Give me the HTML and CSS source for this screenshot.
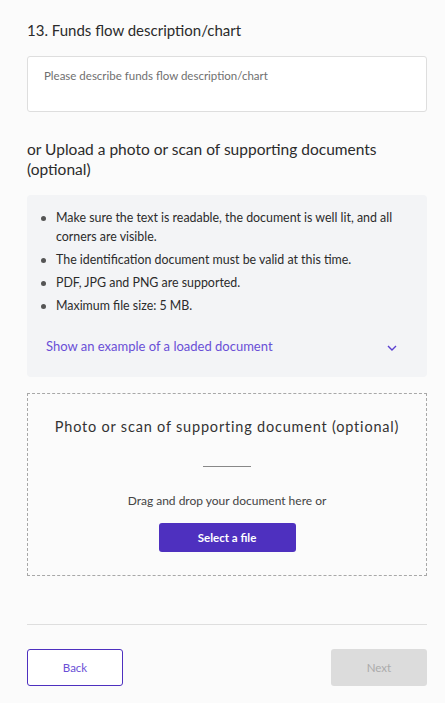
FILE: index.html
```html
<!DOCTYPE html>
<html lang="en">
<head>
<meta charset="utf-8">
<link rel="stylesheet" href="styles.css">
</head>
<body>
<main class="page">
  <h2 class="q-title">13. Funds flow description/chart</h2>
  <div class="textarea"><span class="placeholder">Please describe funds flow description/chart</span></div>

  <h2 class="upload-title">or Upload a photo or scan of supporting documents (optional)</h2>

  <section class="info">
    <ul class="rules">
      <li>Make sure the text is readable, the document is well lit, and all corners are visible.</li>
      <li>The identification document must be valid at this time.</li>
      <li>PDF, JPG and PNG are supported.</li>
      <li>Maximum file size: 5 MB.</li>
    </ul>
    <div class="example">
      <span class="example-link">Show an example of a loaded document</span>
      <svg class="chev" width="10" height="6" viewBox="0 0 10 6"><path d="M1 1l4 4 4-4" fill="none" stroke="#5a3fd0" stroke-width="1.4"/></svg>
    </div>
  </section>

  <section class="drop">
    <h3 class="drop-title">Photo or scan of supporting document (optional)</h3>
    <div class="drop-rule"></div>
    <p class="drop-text">Drag and drop your document here or</p>
    <button class="btn-select">Select a file</button>
  </section>

  <div class="spacer"></div>
  <hr class="divider">
  <div class="nav">
    <button class="btn-back">Back</button>
    <button class="btn-next">Next</button>
  </div>
</main>
</body>
</html>
```

FILE: styles.css
```css
* { box-sizing: border-box; }
html, body { margin: 0; padding: 0; }
body {
  background: #fbfbfb;
  font-family: Lato, "Liberation Sans", sans-serif;
  color: #2b2b2b;
}
.page {
  width: 400px;
  margin: 0 27px;
  padding-top: 20px;
  display: flex;
  flex-direction: column;
}
.q-title {
  margin: 0;
  font-size: 15px;
  font-weight: 400;
  line-height: 20px;
  color: #2b2b2b;
}
.textarea {
  margin-top: 16px;
  height: 56px;
  background: #fff;
  border: 1px solid #dedede;
  border-radius: 3px;
  padding: 9px 16px;
  line-height: 16px;
}
.placeholder {
  font-size: 11.5px;
  color: #6f6f6f;
}
.upload-title {
  margin: 27px 0 0;
  font-size: 15.5px;
  font-weight: 400;
  line-height: 20px;
  color: #2b2b2b;
}
.info {
  margin-top: 16px;
  background: #f3f4f6;
  border-radius: 4px;
  padding: 13px 15px 22px 14px;
}
.rules {
  margin: 0;
  padding: 0;
  list-style: none;
}
.rules li {
  position: relative;
  padding-left: 15px;
  font-size: 12.4px;
  line-height: 19px;
  color: #2b2b2b;
  margin-bottom: 4px;
}
.rules li::before {
  content: "";
  position: absolute;
  left: 0;
  top: 8px;
  width: 5px;
  height: 5px;
  border-radius: 50%;
  background: #555;
}
.example {
  margin-top: 22px;
  display: flex;
  align-items: center;
  justify-content: space-between;
  padding: 0 15px 0 5px;
}
.example-link {
  font-size: 13px;
  line-height: 18px;
  color: #6a4fd6;
}
.chev { margin-top: 4px; }
.drop {
  margin-top: 16px;
  height: 183px;
  border: 1px dashed #a8a8a8;
  display: flex;
  flex-direction: column;
  align-items: center;
}
.drop-title {
  margin: 24px 0 0;
  font-size: 14.5px;
  font-weight: 400;
  letter-spacing: 0.8px;
  line-height: 18px;
  color: #333;
}
.drop-rule {
  margin-top: 30px;
  width: 48px;
  height: 1px;
  background: #888;
}
.drop-text {
  margin: 26px 0 0;
  font-size: 12px;
  line-height: 15px;
  color: #444;
}
.btn-select {
  margin-top: 15px;
  width: 137px;
  height: 29px;
  border: none;
  border-radius: 3px;
  background: #4e30bf;
  color: #fff;
  font-family: inherit;
  font-weight: 700;
  font-size: 11.5px;
}
.spacer { height: 48px; }
.divider {
  margin: 0;
  border: none;
  height: 1px;
  background: #dedede;
}
.nav {
  margin-top: 24px;
  display: flex;
  justify-content: space-between;
}
.btn-back, .btn-next {
  width: 96px;
  height: 37px;
  border-radius: 3px;
  font-family: inherit;
  font-size: 11.5px;
  font-weight: 400;
}
.btn-back {
  background: #fff;
  border: 1px solid #4e30bf;
  color: #6a4fd6;
}
.btn-next {
  background: #dcdcdc;
  border: none;
  color: #ababab;
}
```
